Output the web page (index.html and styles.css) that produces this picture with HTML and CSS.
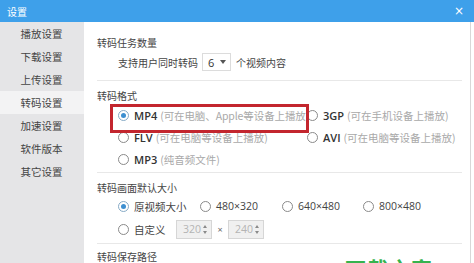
FILE: index.html
```html
<!DOCTYPE html>
<html lang="zh">
<head>
<meta charset="utf-8">
<link rel="stylesheet" href="styles.css">
</head>
<body>
<div class="window">
  <div class="titlebar">
    <span class="title">设置</span>
    <span class="close">×</span>
  </div>
  <div class="main">
    <ul class="sidebar">
      <li>播放设置</li>
      <li>下载设置</li>
      <li>上传设置</li>
      <li class="active">转码设置</li>
      <li>加速设置</li>
      <li>软件版本</li>
      <li>其它设置</li>
    </ul>
    <div class="content">
      <section class="group g1">
        <h3>转码任务数量</h3>
        <div class="row">
          <span>支持用户同时转码</span>
          <span class="select"><span class="val">6</span><span class="caret"></span></span>
          <span>个视频内容</span>
        </div>
      </section>
      <section class="group g2">
        <h3>转码格式</h3>
        <div class="fmt">
          <label class="opt hl"><span class="radio on"></span><b>MP4</b><em>(可在电脑、Apple等设备上播放)</em></label>
          <label class="opt"><span class="radio"></span><b>3GP</b><em>(可在手机设备上播放)</em></label>
          <label class="opt"><span class="radio"></span><b>FLV</b><em>(可在电脑等设备上播放)</em></label>
          <label class="opt"><span class="radio"></span><b>AVI</b><em>(可在电脑等设备上播放)</em></label>
          <label class="opt"><span class="radio"></span><b>MP3</b><em>(纯音频文件)</em></label>
        </div>
      </section>
      <section class="group g3">
        <h3>转码画面默认大小</h3>
        <div class="sizes first">
          <label class="opt s1"><span class="radio on"></span><span class="cjk">原视频大小</span></label>
          <label class="opt s2"><span class="radio"></span><span class="num">480×320</span></label>
          <label class="opt s3"><span class="radio"></span><span class="num">640×480</span></label>
          <label class="opt"><span class="radio"></span><span class="num">800×480</span></label>
        </div>
        <div class="sizes custom">
          <label class="opt c1"><span class="radio"></span><span class="cjk">自定义</span></label>
          <span class="spin"><span class="num">320</span><span class="arrows"></span></span>
          <span class="x">×</span>
          <span class="spin"><span class="num">240</span><span class="arrows"></span></span>
        </div>
      </section>
      <section class="group g4">
        <h3>转码保存路径</h3>
        <span class="mark">下载之家</span>
      </section>
    </div>
  </div>
</div>
</body>
</html>
```
FILE: styles.css
```css
* { box-sizing: border-box; margin: 0; padding: 0; }
html, body { width: 474px; height: 263px; overflow: hidden; background: #fff; }
body { font-family: "Noto Sans CJK SC", "Noto Sans", sans-serif; font-size: 10px; color: #444; }
.window { width: 474px; height: 263px; display: flex; flex-direction: column; }
.titlebar {
  height: 22px; background: #3ea0ea; color: #fff;
  display: flex; align-items: center; justify-content: space-between;
  padding: 0 10px 0 7px; flex: none;
}
.title { font-size: 10px; }
.close { font-family: "DejaVu Sans", sans-serif; font-size: 12px; line-height: 1; margin-top: -1px; }
.main { flex: 1; display: flex; min-height: 0; }
.sidebar { list-style: none; width: 84px; background: #e5e5e7; flex: none; }
.sidebar li { height: 23px; line-height: 23px; text-align: center; color: #444; font-size: 10.5px; padding-right: 1px; }
.sidebar li.active { background: #f3f3f4; }
.content {
  flex: 1; padding: 0 8px 0 13px; border-right: 1px solid #d8d8d8; margin-right: 3px;
  overflow: hidden;
}
.group { border-bottom: 1px solid #e8e8e8; }
h3 { font-weight: normal; font-size: 10px; height: 16px; line-height: 16px; color: #444; }
.g1 { padding: 13px 0 7px; }
.g2 { padding: 7px 0 2px; }
.g3 { padding: 7px 0 3px; }
.g4 { padding-top: 5px; border-bottom: none; position: relative; }
.row { display: flex; align-items: center; padding-left: 21px; height: 22px; }
.select {
  display: inline-flex; align-items: center; justify-content: space-between;
  width: 29px; height: 18px; border: 1px solid #dcdcdc; padding: 0 4px 0 5px;
  margin: 0 5px 0 4px;
}
.val { font-family: "Open Sans", sans-serif; font-size: 11px; color: #333; }
.caret { width: 0; height: 0; border-left: 3.5px solid transparent; border-right: 3.5px solid transparent; border-top: 4px solid #555; }
.fmt { display: grid; grid-template-columns: 189px auto; padding-left: 21px; }
.opt { display: flex; align-items: center; height: 22px; white-space: nowrap; }
.opt b { font-family: "Open Sans", sans-serif; font-weight: 600; font-size: 11px; color: #333; margin-right: 3px; }
.opt em { font-style: normal; color: #a9a9a9; font-size: 10.5px; }
.opt.hl { position: relative; }
.opt.hl em { letter-spacing: -0.1px; }
.opt.hl::after {
  content: ""; position: absolute; left: -8px; top: 0; width: 193px; height: 23px;
  border: 3px solid #c3262e; pointer-events: none;
}
.radio {
  width: 11px; height: 11px; border: 1px solid #8a8a8a; border-radius: 50%; flex: none; background: #fff;
  display: inline-flex; align-items: center; justify-content: center; margin-right: 5px;
}
.radio.on { border-color: #86aac6; }
.radio.on::after { content: ""; width: 5px; height: 5px; border-radius: 50%; background: #3d8fd0; }
.sizes { display: flex; align-items: center; padding-left: 21px; height: 22px; }
.sizes.first { margin-top: -1px; }
.sizes.custom { margin-top: 1px; }
.s1, .s2 { width: 82px; }
.s3 { width: 81px; }
.c1 { width: 58px; }
.cjk { font-size: 10.5px; color: #444; }
.num { font-family: "Open Sans", sans-serif; font-size: 10.5px; color: #444; }
.spin {
  display: inline-flex; align-items: center; justify-content: space-between;
  width: 36px; height: 19px; background: #f0f0f0; border: 1px solid #d6d6d6;
  padding: 0 3px 0 6px;
}
.spin .num { color: #b4b4b4; }
.arrows { width: 5px; height: 9px; position: relative; }
.arrows::before, .arrows::after { content: ""; position: absolute; left: 0; width: 0; height: 0; border-left: 2.5px solid transparent; border-right: 2.5px solid transparent; }
.arrows::before { top: 0; border-bottom: 3px solid #8a8a8a; }
.arrows::after { bottom: 0; border-top: 3px solid #8a8a8a; }
.x { width: 16px; text-align: center; color: #666; font-family: "Open Sans", sans-serif; font-size: 9px; }
.mark {
  position: absolute; left: 248px; top: 14px; color: #35b34e; font-size: 21px; font-weight: bold; letter-spacing: 1px; line-height: 1;
}
```
